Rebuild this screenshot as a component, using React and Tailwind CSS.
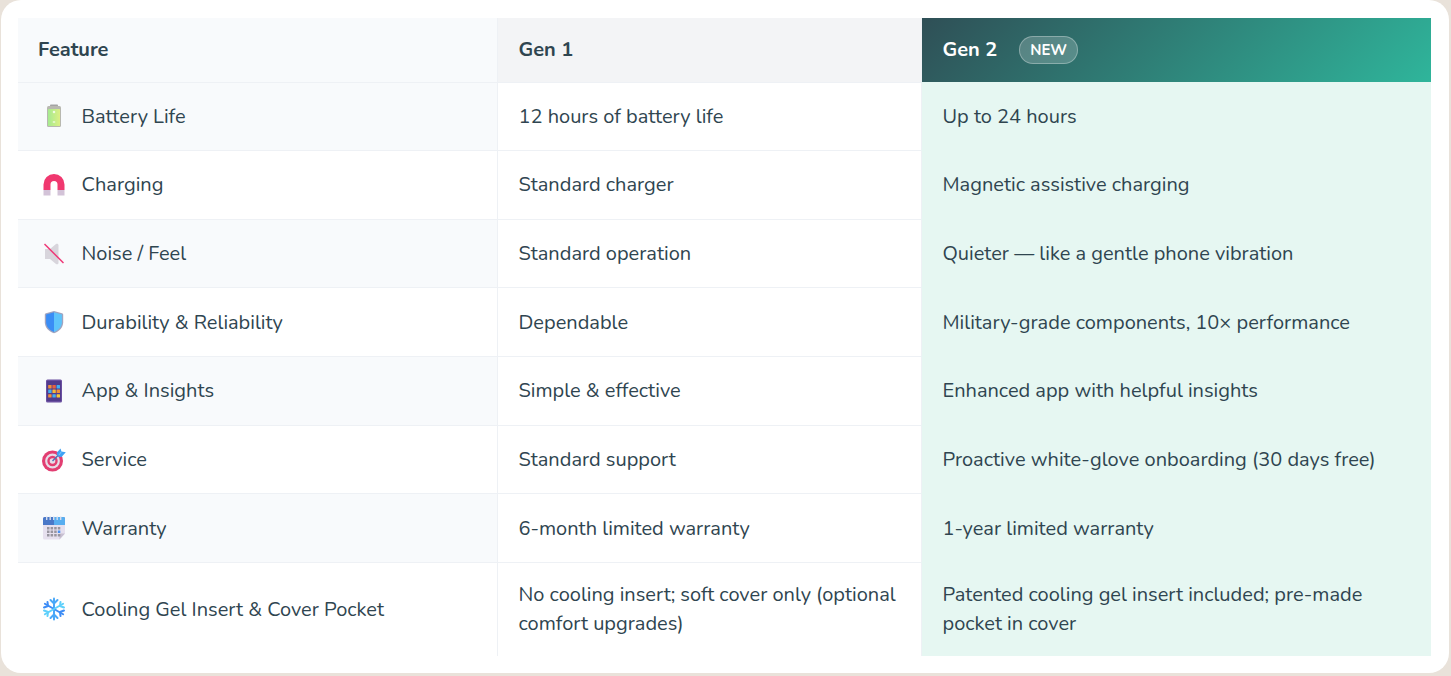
const FONT = "font-['Nunito','Noto_Sans','Open_Sans',sans-serif]";

const Battery = () => (
  <svg width="24" height="24" viewBox="0 0 24 24">
    <defs>
      <linearGradient id="bat" x1="0" y1="0" x2="1" y2="0">
        <stop offset="0" stopColor="#a6ea90" />
        <stop offset="1" stopColor="#dcf084" />
      </linearGradient>
    </defs>
    <rect x="8" y="0.500" width="8" height="2.500" rx="0.800" fill="#a3a3a3" />
    <rect x="5" y="2" width="14" height="21" rx="1.500" fill="#b8b8b0" />
    <rect x="6" y="5" width="12" height="17" rx="0.600" fill="url(#bat)" />
    <rect x="10.800" y="7.500" width="2.400" height="1" fill="#fff" />
    <rect x="11.500" y="6.800" width="1" height="2.400" fill="#fff" />
    <rect x="10.800" y="17.500" width="2.400" height="1" fill="#fff" />
  </svg>
);

const Magnet = () => (
  <svg width="24" height="24" viewBox="0 0 24 24">
    <path d="M1.500 17V11.500a10.500 10.500 0 0 1 21 0V17h-7V11.500a3.500 3.500 0 0 0-7 0V17z" fill="#f0386f" />
    <rect x="1.500" y="17" width="7" height="5.500" fill="#d3c3d8" />
    <rect x="15.500" y="17" width="7" height="5.500" fill="#d3c3d8" />
  </svg>
);

const Muted = () => (
  <svg width="24" height="24" viewBox="0 0 24 24">
    <path d="M3 7h5l6-5c1.200-.8 2.500-.2 2.500 1.300v17.400c0 1.500-1.300 2.100-2.500 1.300l-6-5H3z" fill="#d8d5dc" />
    <path d="M2.500 2 21.500 21" stroke="#ee3a78" strokeWidth="1.500" />
  </svg>
);

const Shield = () => (
  <svg width="24" height="24" viewBox="0 0 24 24">
    <path d="M12 1 20 3.200c.7.2 1.200.8 1.200 1.600v7.400c0 5-3.700 9-9.200 11C6.500 21.200 2.800 17.200 2.800 12.200V4.800c0-.8.500-1.400 1.200-1.600z" fill="#a0a4c0" />
    <path d="M12 2.300 4.100 4.500v7.700c0 4.300 3.100 7.700 7.900 9.700z" fill="#3a8df5" />
    <path d="M12 2.300 19.900 4.500v7.700c0 4.300-3.100 7.700-7.900 9.700z" fill="#5ec4fb" />
  </svg>
);

const Abacus = () => {
  const colors = ["#f0903a", "#e8603f", "#43b0f1", "#43b0f1", "#f5b83a", "#f0903a", "#f0903a", "#43b0f1", "#f5c83a"];
  return (
    <svg width="24" height="24" viewBox="0 0 24 24">
      <rect x="4" y="0.500" width="16" height="23" rx="1.500" fill="#6a4fa0" />
      <rect x="5" y="2" width="14" height="20" fill="#523b8c" />
      {colors.map((c, i) => (
        <rect key={i} x={6.200 + (i % 3) * 4.200} y={6 + Math.floor(i / 3) * 4.600} width="3.400" height="3.400" rx="0.500" fill={c} />
      ))}
    </svg>
  );
};

const Target = () => (
  <svg width="24" height="24" viewBox="0 0 24 24">
    <circle cx="10.500" cy="13" r="10.500" fill="#e23e72" />
    <circle cx="10.500" cy="13" r="7.400" fill="#e7dde8" />
    <circle cx="10.500" cy="13" r="5.200" fill="#e23e72" />
    <circle cx="10.500" cy="13" r="2.800" fill="#e7dde8" />
    <path d="M10.500 13 18.500 5" stroke="#4a76b8" strokeWidth="1.500" />
    <path d="M14.500 5 18.500 0.500 19.500 3.500 23.800 4.200 19.500 9 16 8.500z" fill="#3fa2f5" />
    <path d="M17 7 19.500 3.500" stroke="#8fd0fb" strokeWidth="0.800" />
  </svg>
);

const Calendar = () => {
  const dots = [];
  for (let r = 0; r < 3; r++) {
    for (let c = 0; c < 4; c++) {
      dots.push(<rect key={`${r}-${c}`} x={5 + c * 3.600} y={11 + r * 3.500} width="2.500" height="2.500" fill={r === 1 && c === 3 ? "#4a90f0" : "#98959f"} />);
    }
  }
  return (
    <svg width="24" height="24" viewBox="0 0 24 24">
      <path d="M2.500 1h19A1.500 1.500 0 0 1 23 2.500v15L17.500 23.500H2.500A1.500 1.500 0 0 1 1 22V2.500A1.500 1.500 0 0 1 2.500 1z" fill="#e6e0ee" />
      <path d="M23 17.500h-4.200a1.300 1.300 0 0 0-1.300 1.300v4.700z" fill="#c8c0d2" />
      <path d="M2.500 1h19A1.500 1.500 0 0 1 23 2.500V9H1V2.500A1.500 1.500 0 0 1 2.500 1z" fill="#4a78c8" />
      <path d="M12 1h9.500A1.500 1.500 0 0 1 23 2.500V9H12z" fill="#58aef0" />
      {[4, 7.500, 11, 14.500, 18].map((x) => (
        <rect key={x} x={x} y="0.500" width="1.400" height="3.500" fill="#d6dcec" />
      ))}
      {dots}
    </svg>
  );
};

const Snowflake = () => (
  <svg width="24" height="24" viewBox="0 0 24 24" fill="none" strokeWidth="2" strokeLinecap="round" strokeLinejoin="round">
    <path d="M12 1.500v21" stroke="#4aa8f8" />
    <path d="M8.500 3 12 6.500 15.500 3M8.500 21 12 17.500 15.500 21" stroke="#4aa8f8" />
    <path d="M2.900 6.750 21.100 17.250" stroke="#3d8cf5" />
    <path d="M21.100 6.750 2.900 17.250" stroke="#5fd0fb" />
    <path d="M2 10.500 6 9 5.500 5M22 13.500 18 15 18.500 19" stroke="#3d8cf5" />
    <path d="M22 10.500 18 9 18.500 5M2 13.500 6 15 5.500 19" stroke="#5fd0fb" />
  </svg>
);

const rows = [
  { icon: <Battery />, feature: "Battery Life", gen1: "12 hours of battery life", gen2: "Up to 24 hours" },
  { icon: <Magnet />, feature: "Charging", gen1: "Standard charger", gen2: "Magnetic assistive charging" },
  { icon: <Muted />, feature: "Noise / Feel", gen1: "Standard operation", gen2: "Quieter — like a gentle phone vibration" },
  { icon: <Shield />, feature: "Durability & Reliability", gen1: "Dependable", gen2: "Military-grade components, 10× performance" },
  { icon: <Abacus />, feature: "App & Insights", gen1: "Simple & effective", gen2: "Enhanced app with helpful insights" },
  { icon: <Target />, feature: "Service", gen1: "Standard support", gen2: "Proactive white-glove onboarding (30 days free)" },
  { icon: <Calendar />, feature: "Warranty", gen1: "6-month limited warranty", gen2: "1-year limited warranty" },
  { icon: <Snowflake />, feature: "Cooling Gel Insert & Cover Pocket", gen1: "No cooling insert; soft cover only (optional comfort upgrades)", gen2: "Patented cooling gel insert included; pre-made pocket in cover" },
];

export default function App() {
  return (
    <div className={`h-[676px] w-[1451px] overflow-hidden bg-[#e9e2da] ${FONT}`}>
      <div className="ml-px h-[673px] w-[1448px] rounded-[20px] bg-white p-[18px] pl-[17px]">
        <div className="grid w-[1413px] grid-cols-[479px_424px_510px] text-[20px] leading-[29px] text-[#2f4550]">
          <div className="flex h-[64.500px] items-center border-b border-[#eef1f5] bg-[#f8fafc] px-5 font-bold">Feature</div>
          <div className="flex h-[64.500px] items-center border-b border-l border-[#eef1f5] bg-[#f3f4f6] px-[20.500px] font-bold">Gen 1</div>
          <div className="flex h-[64.500px] items-center gap-[22px] border-b border-l border-b-[#e6f7f2] border-l-[#eef1f5] bg-[linear-gradient(135deg,#2f4f56_0%,#2fb59b_100%)] bg-clip-padding px-[20.500px] font-bold text-white">
            Gen 2
            <span className="rounded-full border border-white/30 bg-white/20 px-[10px] py-[2px] text-[15px] leading-[22px] font-bold">NEW</span>
          </div>
          {rows.map((row, i) => {
            const last = i === rows.length - 1;
            return [
              <div key={`f${i}`} className={`flex items-center gap-[15.500px] px-[24px] ${last ? "h-[92.700px]" : "h-[68.650px] border-b border-[#eef1f5]"} ${i % 2 === 0 ? "bg-[#f8fafc]" : "bg-white"}`}>
                <span className="flex w-[24px] shrink-0 justify-center">{row.icon}</span>
                {row.feature}
              </div>,
              <div key={`a${i}`} className={`flex items-center border-l border-[#eef1f5] bg-white px-[20.500px] ${last ? "h-[92.700px]" : "h-[68.650px] border-b"}`}>
                {row.gen1}
              </div>,
              <div key={`b${i}`} className={`flex items-center border-l border-l-[#eef1f5] bg-[#e6f7f2] px-[20.500px] ${last ? "h-[92.700px]" : "h-[68.650px] border-b border-b-transparent"}`}>
                {row.gen2}
              </div>,
            ];
          })}
        </div>
      </div>
    </div>
  );
}
